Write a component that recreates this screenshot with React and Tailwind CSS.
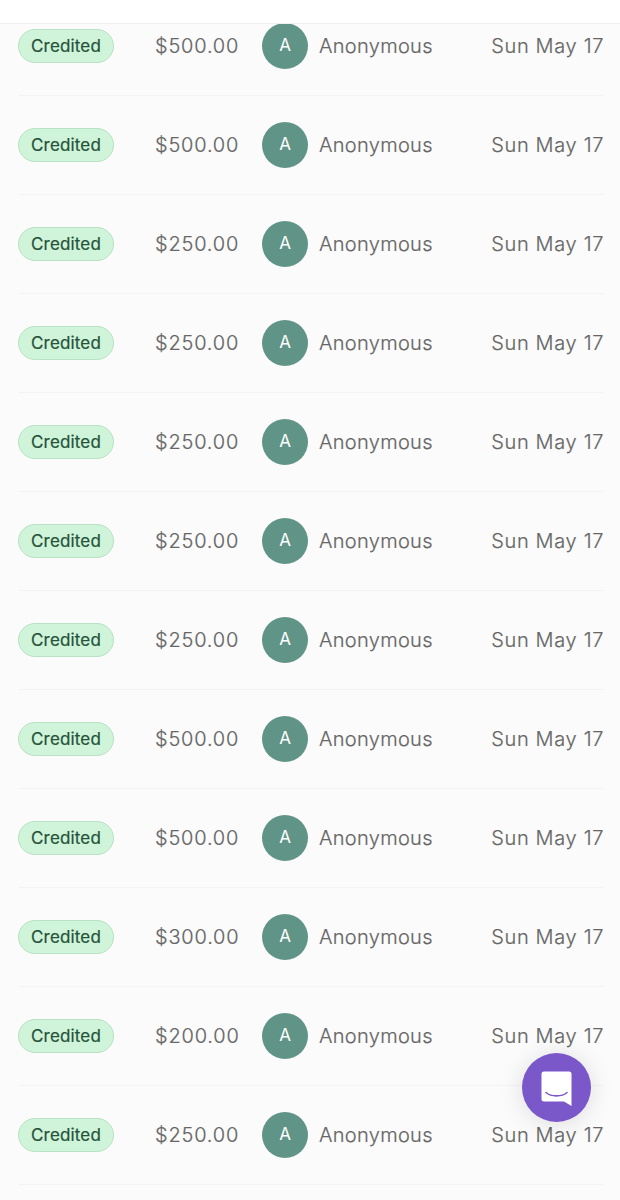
const amounts = ["500", "500", "250", "250", "250", "250", "250", "500", "500", "300", "200", "250"];

function Row({ amount }) {
  return (
    <div className="flex h-[99px] items-center border-b border-[#f3f3f3] text-[20px] text-[#666666]">
      <span className="flex h-[34px] w-[96px] shrink-0 items-center justify-center rounded-full border border-[#b8e2c2] bg-[#d0f4d9] pt-px text-[17px] font-normal tracking-[0.15px] text-[#24523a] [-webkit-text-stroke:0.2px_#24523a]">
        Credited
      </span>
      <span className="ml-[41px] w-[84px] shrink-0 whitespace-nowrap font-light tracking-[0.8px] [-webkit-text-stroke:0.2px_#666666]">${amount}.00</span>
      <span className="ml-[23px] flex h-[46px] w-[46px] shrink-0 items-center justify-center rounded-full bg-[#5f9487] text-[17px] font-normal text-white">
        A
      </span>
      <span className="ml-[11px] font-light tracking-[0.3px] [-webkit-text-stroke:0.2px_#666666]">Anonymous</span>
      <span className="ml-auto whitespace-nowrap font-light tracking-[0.65px] [-webkit-text-stroke:0.2px_#666666]">Sun May 17</span>
    </div>
  );
}

export default function App() {
  return (
    <div className="relative flex h-[1200px] w-[620px] flex-col overflow-hidden bg-[#fbfbfb] font-['Inter',sans-serif]">
      <div className="z-10 h-[24px] shrink-0 border-b border-[#efefef] bg-white" />
      <div className="-mt-[27px] pl-[18px] pr-[16px]">
        {amounts.map((a, i) => (
          <Row key={i} amount={a} />
        ))}
      </div>
      <button className="absolute left-[522px] top-[1053px] z-20 flex h-[69px] w-[69px] items-center justify-center rounded-full bg-[#7a58ca] shadow-[0_2px_24px_rgba(0,0,0,0.12)]">
        <svg width="32" height="36" viewBox="0 0 32 36" fill="none">
          <path d="M3 1.5H28A2.5 2.5 0 0 1 30.5 4V36L23 31.5H3A2.5 2.5 0 0 1 0.5 29V4A2.5 2.5 0 0 1 3 1.5Z" fill="white" />
          <path d="M5 22.5C10 27 21 27 26 22.5" stroke="#7a58ca" strokeWidth="1.6" strokeLinecap="round" />
        </svg>
      </button>
    </div>
  );
}
